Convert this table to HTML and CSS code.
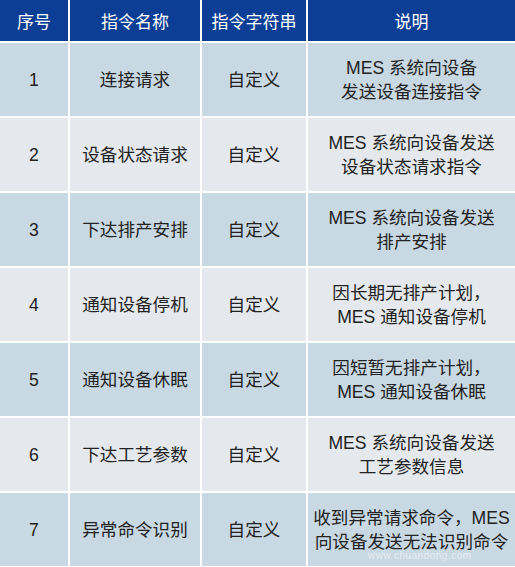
FILE: index.html
```html
<!DOCTYPE html>
<html lang="zh">
<head>
<meta charset="utf-8">
<link rel="stylesheet" href="styles.css">
</head>
<body>
<div class="table">
  <div class="th">序号</div><div class="th">指令名称</div><div class="th">指令字符串</div><div class="th">说明</div>

  <div class="td odd">1</div><div class="td odd">连接请求</div><div class="td odd">自定义</div><div class="td odd">MES 系统向设备<br>发送设备连接指令</div>
  <div class="td even">2</div><div class="td even">设备状态请求</div><div class="td even">自定义</div><div class="td even">MES 系统向设备发送<br>设备状态请求指令</div>
  <div class="td odd">3</div><div class="td odd">下达排产安排</div><div class="td odd">自定义</div><div class="td odd">MES 系统向设备发送<br>排产安排</div>
  <div class="td even">4</div><div class="td even">通知设备停机</div><div class="td even">自定义</div><div class="td even">因长期无排产计划，<br>MES 通知设备停机</div>
  <div class="td odd">5</div><div class="td odd">通知设备休眠</div><div class="td odd">自定义</div><div class="td odd">因短暂无排产计划，<br>MES 通知设备休眠</div>
  <div class="td even">6</div><div class="td even">下达工艺参数</div><div class="td even">自定义</div><div class="td even">MES 系统向设备发送<br>工艺参数信息</div>
  <div class="td odd">7</div><div class="td odd">异常命令识别</div><div class="td odd">自定义</div><div class="td odd last">收到异常请求命令，MES<br>向设备发送无法识别命令<span class="mark">www.chuandong.com</span></div>
</div>
</body>
</html>
```
FILE: styles.css
```css
html, body {
  margin: 0;
  padding: 0;
  background: #ffffff;
}
.table {
  width: 515px;
  display: grid;
  grid-template-columns: 68px 130px 104px 207px;
  grid-template-rows: 41px repeat(7, 73px);
  gap: 2px;
  background: #ffffff;
  font-family: "Liberation Sans", "Noto Sans CJK SC", sans-serif;
  font-size: 17.6px;
  color: #222222;
}
.th {
  background: #0c3e95;
  color: #ffffff;
  display: flex;
  align-items: center;
  justify-content: center;
  font-size: 17px;
}
.td {
  display: flex;
  align-items: center;
  justify-content: center;
  text-align: center;
  line-height: 24px;
}
.odd { background: #c9d9e3; }
.even { background: #e5e9ed; }
.last { position: relative; }
.mark {
  position: absolute;
  left: 60px;
  bottom: 5px;
  font-size: 10px;
  line-height: 10px;
  color: rgba(255,255,255,0.55);
  letter-spacing: 0.5px;
}
```
